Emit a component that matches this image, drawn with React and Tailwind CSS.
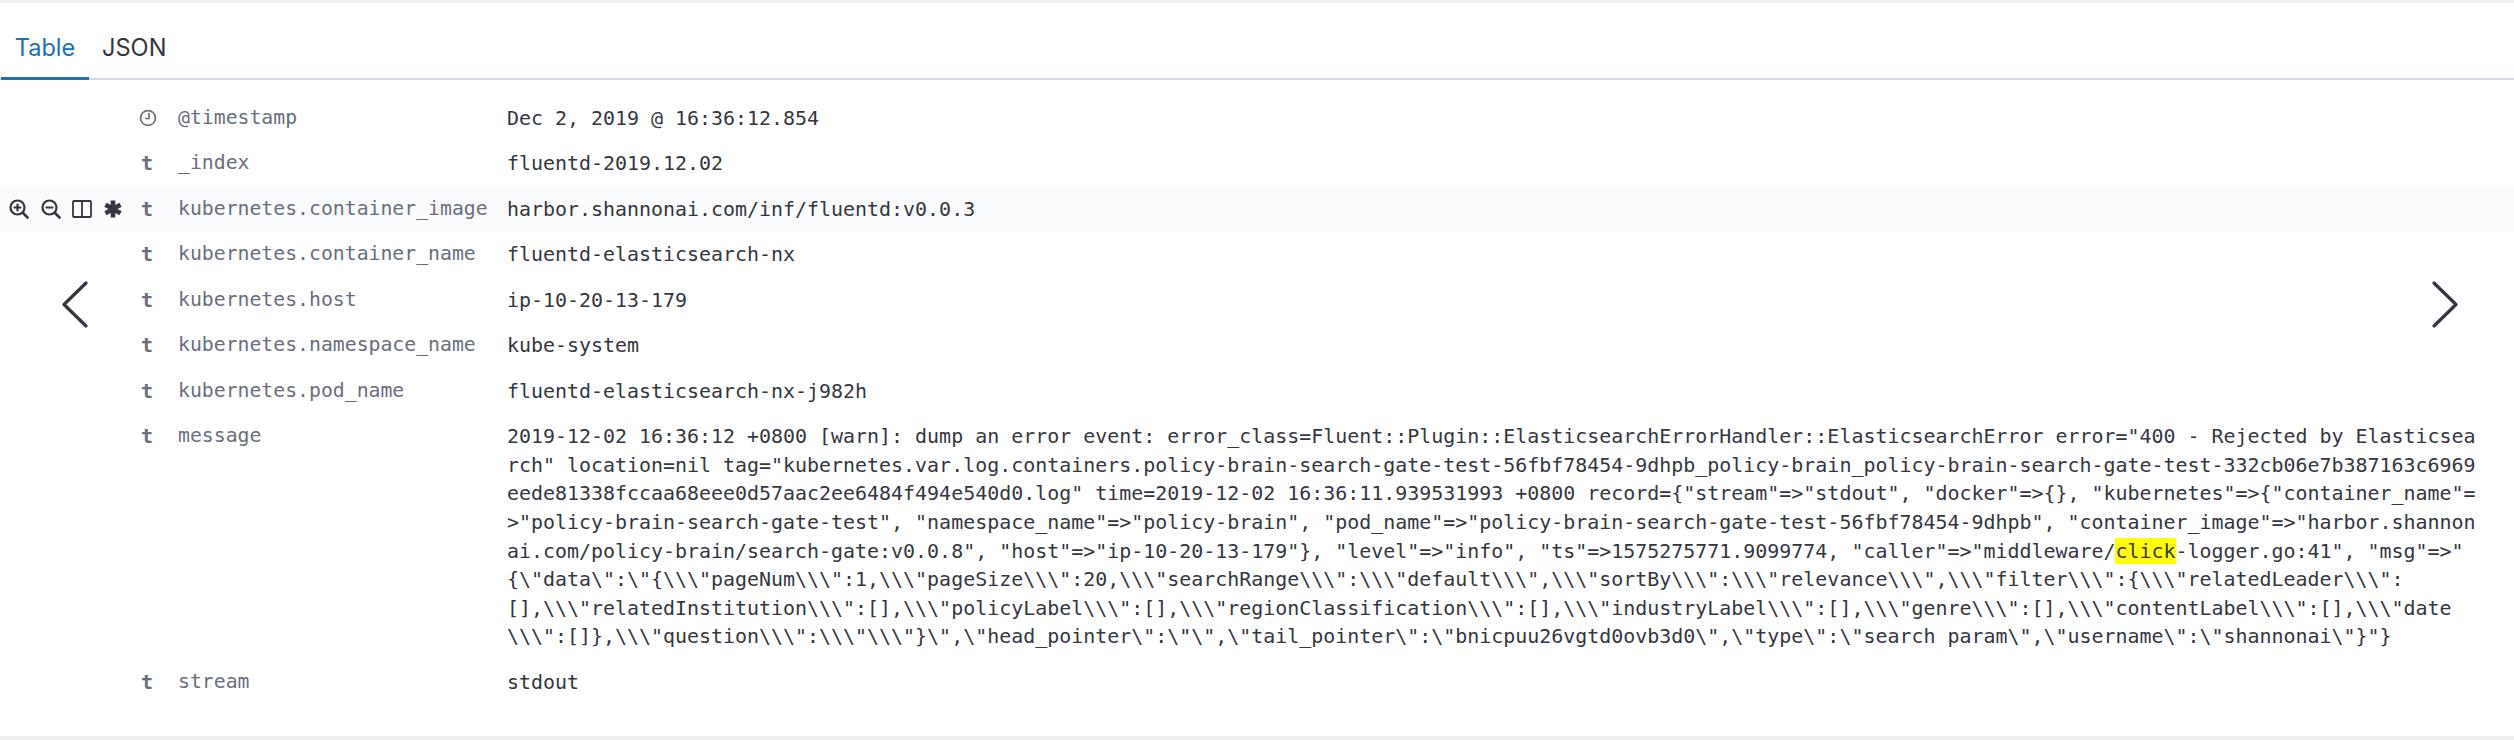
const MONO = "font-['DejaVu_Sans_Mono',monospace]";

const messageLines = [
  String.raw`2019-12-02 16:36:12 +0800 [warn]: dump an error event: error_class=Fluent::Plugin::ElasticsearchErrorHandler::ElasticsearchError error="400 - Rejected by Elasticsea`,
  String.raw`rch" location=nil tag="kubernetes.var.log.containers.policy-brain-search-gate-test-56fbf78454-9dhpb_policy-brain_policy-brain-search-gate-test-332cb06e7b387163c6969`,
  String.raw`eede81338fccaa68eee0d57aac2ee6484f494e540d0.log" time=2019-12-02 16:36:11.939531993 +0800 record={"stream"=>"stdout", "docker"=>{}, "kubernetes"=>{"container_name"=`,
  String.raw`>"policy-brain-search-gate-test", "namespace_name"=>"policy-brain", "pod_name"=>"policy-brain-search-gate-test-56fbf78454-9dhpb", "container_image"=>"harbor.shannon`,
  null,
  String.raw`{\"data\":\"{\\\"pageNum\\\":1,\\\"pageSize\\\":20,\\\"searchRange\\\":\\\"default\\\",\\\"sortBy\\\":\\\"relevance\\\",\\\"filter\\\":{\\\"relatedLeader\\\":`,
  String.raw`[],\\\"relatedInstitution\\\":[],\\\"policyLabel\\\":[],\\\"regionClassification\\\":[],\\\"industryLabel\\\":[],\\\"genre\\\":[],\\\"contentLabel\\\":[],\\\"date`,
  String.raw`\\\":[]},\\\"question\\\":\\\"\\\"}\",\"head_pointer\":\"\",\"tail_pointer\":\"bnicpuu26vgtd0ovb3d0\",\"type\":\"search param\",\"username\":\"shannonai\"}"}`,
];

function ZoomGlyph({ plus }) {
  return (
    <svg width="20" height="20" viewBox="0 0 20 20" fill="none" stroke="#343741" strokeWidth="2.2" strokeLinecap="round">
      <circle cx="8.5" cy="8.5" r="7" />
      <path d="M14 14l4.5 4.5" strokeWidth="2.6" />
      <path d="M5.5 8.5h6" />
      {plus && <path d="M8.5 5.5v6" />}
    </svg>
  );
}

function ColumnsGlyph() {
  return (
    <svg width="20" height="20" viewBox="0 0 20 20" fill="none" stroke="#343741" strokeWidth="1.8">
      <rect x="1" y="2" width="18" height="16" rx="1" />
      <path d="M10 2v16" />
    </svg>
  );
}

function AsteriskGlyph() {
  return (
    <svg width="18" height="18" viewBox="0 0 18 18" fill="none" stroke="#343741" strokeWidth="4.6">
      <path d="M9 0.5v17M1.5 4.7l15 8.6M16.5 4.7l-15 8.6" />
    </svg>
  );
}

function ClockGlyph() {
  return (
    <svg width="18" height="18" viewBox="0 0 18 18" fill="none" stroke="#69707d" strokeWidth="1.7" strokeLinecap="round">
      <circle cx="9" cy="9" r="7.4" />
      <path d="M10 4.5v5H6.8" />
    </svg>
  );
}

function Row({ type, name, hover, children }) {
  return (
    <div className={`flex items-start py-[8.45px] leading-[28.6px] ${hover ? "bg-[#fafbfd]" : ""}`}>
      <div className="flex h-[28.6px] w-[137px] shrink-0 items-center gap-[11.5px] pl-[9px]">
        {hover && (
          <>
            <ZoomGlyph plus />
            <ZoomGlyph />
            <ColumnsGlyph />
            <AsteriskGlyph />
          </>
        )}
      </div>
      <div className="flex h-[28.6px] w-[41px] shrink-0 items-center pl-[2px]">
        {type === "date" ? (
          <ClockGlyph />
        ) : (
          <span className={`${MONO} pl-[2px] text-[20px] font-bold text-[#69707d]`}>t</span>
        )}
      </div>
      <div className={`${MONO} w-[329px] shrink-0 whitespace-pre text-[19.8px] text-[#69707d]`}>{name}</div>
      <div className={`${MONO} min-w-0 flex-1 text-[19.95px] text-[#343741]`}>{children}</div>
    </div>
  );
}

function Chevron({ left }) {
  return (
    <svg width="26" height="47" viewBox="0 0 26 47" fill="none" stroke="#343741" strokeWidth="3.2" strokeLinecap="round" strokeLinejoin="round">
      <path d={left ? "M24 2L2 23.5 24 45" : "M2 2l22 21.5L2 45"} />
    </svg>
  );
}

export default function App() {
  return (
    <div className="relative flex h-[740px] flex-col overflow-hidden border-t-[3px] border-b-[4px] border-[#eeeeee] bg-white">
      <div className="flex h-[77px] shrink-0 items-end border-b-2 border-[#d3dae6] pl-[1px] font-['Inter',sans-serif] text-[23.6px]">
        <div className="-mb-[2px] flex h-[60px] w-[88px] items-center justify-center border-b-[3px] border-[#1f6fb2] pb-[2px] text-[#1f6fb2]">Table</div>
        <div className="flex h-[58px] items-center pb-[2px] pl-[13px] text-[#343741]">JSON</div>
      </div>
      <div className="mt-[15.5px]">
        <Row type="date" name="@timestamp">Dec 2, 2019 @ 16:36:12.854</Row>
        <Row name="_index">fluentd-2019.12.02</Row>
        <Row name="kubernetes.container_image" hover>harbor.shannonai.com/inf/fluentd:v0.0.3</Row>
        <Row name="kubernetes.container_name">fluentd-elasticsearch-nx</Row>
        <Row name="kubernetes.host">ip-10-20-13-179</Row>
        <Row name="kubernetes.namespace_name">kube-system</Row>
        <Row name="kubernetes.pod_name">fluentd-elasticsearch-nx-j982h</Row>
        <Row name="message">
          {messageLines.map((line, i) =>
            line === null ? (
              <div key={i} className="whitespace-pre">
                {String.raw`ai.com/policy-brain/search-gate:v0.0.8", "host"=>"ip-10-20-13-179"}, "level"=>"info", "ts"=>1575275771.9099774, "caller"=>"middleware/`}
                <span className="bg-[#ffff00] py-[1px]">click</span>
                {String.raw`-logger.go:41", "msg"=>"`}
              </div>
            ) : (
              <div key={i} className="whitespace-pre">{line}</div>
            )
          )}
        </Row>
        <Row name="stream">stdout</Row>
      </div>
      <div className="absolute left-[62px] top-[278px]"><Chevron left /></div>
      <div className="absolute left-[2432px] top-[278px]"><Chevron /></div>
    </div>
  );
}
